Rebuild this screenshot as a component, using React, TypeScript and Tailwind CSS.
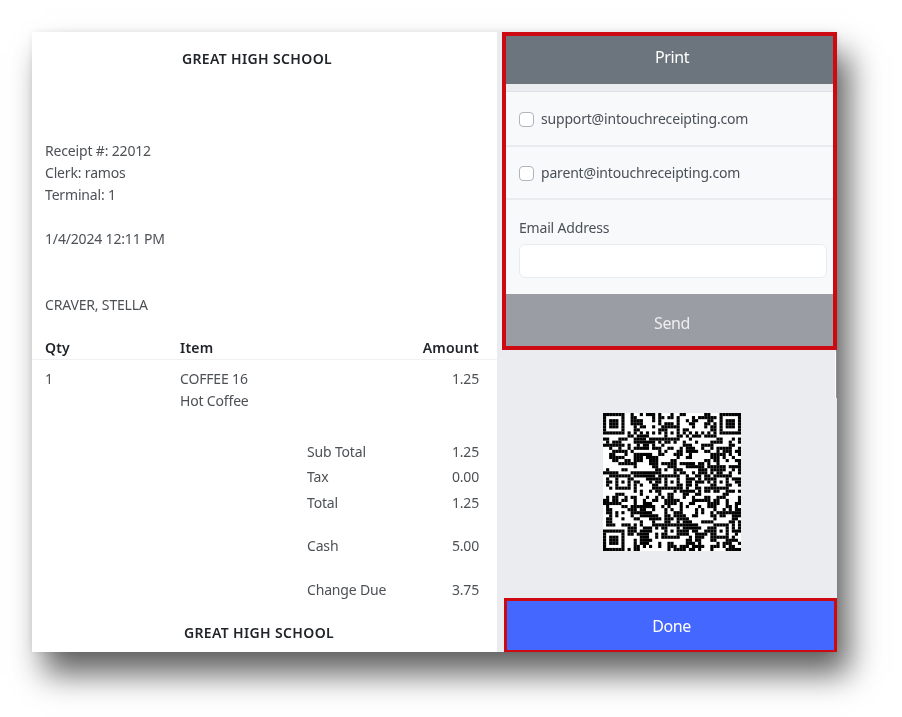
import React from "react";

const QR_SIZE = 45;

// qr version 7 layout: fixed patterns are real, data modules are a seeded fill
const buildQr = () => {
  const grid: number[][] = [];
  let seed = 22012;
  for (let y = 0; y < QR_SIZE; y++) {
    const row: number[] = [];
    for (let x = 0; x < QR_SIZE; x++) {
      seed = (seed * 1103515245 + 12345) & 0x7fffffff;
      const prev = x > 0 ? row[x - 1] : 0;
      const above = y > 0 ? grid[y - 1][x] : 0;
      const chance = 0.34 + prev * 0.14 + above * 0.14;
      row.push((seed >> 8) % 1000 < chance * 1000 ? 1 : 0);
    }
    grid.push(row);
  }
  const clear = (x0: number, y0: number, w: number, h: number) => {
    for (let y = y0; y < y0 + h; y++)
      for (let x = x0; x < x0 + w; x++) grid[y][x] = 0;
  };
  const ring = (x0: number, y0: number, size: number) => {
    for (let y = 0; y < size; y++)
      for (let x = 0; x < size; x++) {
        const edge = x === 0 || y === 0 || x === size - 1 || y === size - 1;
        const inner = size === 7 ? x > 1 && x < 5 && y > 1 && y < 5 : x === 2 && y === 2;
        grid[y0 + y][x0 + x] = edge || inner ? 1 : 0;
      }
  };
  clear(0, 0, 8, 8);
  clear(QR_SIZE - 8, 0, 8, 8);
  clear(0, QR_SIZE - 8, 8, 8);
  ring(0, 0, 7);
  ring(QR_SIZE - 7, 0, 7);
  ring(0, QR_SIZE - 7, 7);
  for (let i = 8; i < QR_SIZE - 8; i++) {
    grid[6][i] = i % 2 === 0 ? 1 : 0;
    grid[i][6] = i % 2 === 0 ? 1 : 0;
  }
  const centers = [
    [6, 22],
    [22, 6],
    [22, 22],
    [22, 38],
    [38, 22],
    [38, 38],
  ];
  centers.forEach(([cx, cy]) => {
    for (let y = 0; y < 5; y++)
      for (let x = 0; x < 5; x++) {
        const on = x === 0 || y === 0 || x === 4 || y === 4 || (x === 2 && y === 2);
        grid[cy - 2 + y][cx - 2 + x] = on ? 1 : 0;
      }
  });
  return grid;
};

const QrCode = () => {
  const grid = buildQr();
  return (
    <svg viewBox={`0 0 ${QR_SIZE} ${QR_SIZE}`} className="w-[138px] h-[138px] block bg-white" shapeRendering="auto">
      {grid.map((row, y) =>
        row.map((cell, x) => (cell ? <rect key={`${x}-${y}`} x={x} y={y} width={1.02} height={1.02} fill="#000" /> : null)),
      )}
    </svg>
  );
};

const totals = [
  { label: "Sub Total", value: "1.25", cls: "mt-[29px]" },
  { label: "Tax", value: "0.00", cls: "mt-[3px]" },
  { label: "Total", value: "1.25", cls: "mt-[4px]" },
  { label: "Cash", value: "5.00", cls: "mt-[21px]" },
  { label: "Change Due", value: "3.75", cls: "mt-[22px]" },
];

export default function App() {
  return (
    <div className="w-[902px] h-[717px] overflow-hidden bg-white pl-8 pt-8 font-['Noto_Sans',sans-serif] text-[14px] leading-[22px]">
      <div className="flex w-[805px] h-[620px] bg-white shadow-[12px_22px_30px_rgba(0,0,0,0.62),0_0_8px_rgba(0,0,0,0.08)] blur-[0.35px]">
        {/* receipt */}
        <div className="w-[465px] shrink-0 text-[#4d5156] tracking-[-0.17px]">
          <p className="pt-4 pr-[15px] text-center font-semibold text-[#212529] tracking-[0.35px]">GREAT HIGH SCHOOL</p>
          <div className="pl-[13px] pt-[70px]">
            <p>Receipt #: 22012</p>
            <p>Clerk: ramos</p>
            <p>Terminal: 1</p>
            <p className="mt-[22px]">1/4/2024 12:11 PM</p>
            <p className="mt-[44px]">CRAVER, STELLA</p>
          </div>
          <div className="mt-[21px] h-[22px] border-b border-[#f0f1f2] box-content grid grid-cols-[135px_1fr_auto] pl-[13px] pr-[18px] font-semibold text-[#212529] tracking-[0.2px]">
            <span>Qty</span>
            <span>Item</span>
            <span>Amount</span>
          </div>
          <div className="mt-[8px] grid grid-cols-[135px_1fr_auto] pl-[13px] pr-[18px]">
            <span>1</span>
            <div>
              <p>COFFEE 16</p>
              <p>Hot Coffee</p>
            </div>
            <span>1.25</span>
          </div>
          <div className="pl-[275px] pr-[18px]">
            {totals.map((t) => (
              <div key={t.label} className={`flex justify-between ${t.cls}`}>
                <span>{t.label}</span>
                <span>{t.value}</span>
              </div>
            ))}
          </div>
          <p className="mt-[21px] pr-[11px] text-center font-semibold text-[#212529] tracking-[0.35px]">GREAT HIGH SCHOOL</p>
        </div>

        {/* divider */}
        <div className="w-[2px] shrink-0 bg-[#e9ecef]" />

        {/* actions */}
        <div className="w-[338px] shrink-0 flex flex-col bg-[#ebecf0]">
          <div className="ml-[3px] h-[318px] border-4 border-[#cd0a12] flex flex-col text-[#495057]">
            <div className="h-[48px] pb-[6px] pl-[5px] bg-[#6c757d] text-white text-[16px] tracking-[-0.4px] flex items-center justify-center">Print</div>
            <div className="flex-1 mt-[7px] bg-[#f8f9fa] border-t border-[#dee2e6] flex flex-col">
              <label className="h-[55px] pt-[1px] border-b-2 border-[#e9ecef] flex items-center pl-[13px] gap-[7px]">
                <span className="w-[15px] h-[15px] rounded-[4px] border border-[#adb5bd] bg-white" />
                <span className="tracking-[-0.18px]">support@intouchreceipting.com</span>
              </label>
              <label className="h-[53px] pt-[1px] border-b-2 border-[#e9ecef] flex items-center pl-[13px] gap-[7px]">
                <span className="w-[15px] h-[15px] rounded-[4px] border border-[#adb5bd] bg-white" />
                <span className="tracking-[-0.18px]">parent@intouchreceipting.com</span>
              </label>
              <div className="pt-[17px] px-[13px]">
                <p className="tracking-[-0.18px]">Email Address</p>
                <div className="mt-[5px] h-[34px] w-[308px] rounded-[6px] bg-white border border-[#e9ecef]" />
              </div>
            </div>
            <div className="h-[52px] pt-[6px] pl-[5px] bg-[#9a9da3] text-[#eceef0] text-[16px] tracking-[-0.4px] flex items-center justify-center">Send</div>
          </div>
          <div className="relative flex-1 flex items-center justify-center pl-[8px] pt-[16px]">
            <QrCode />
            <div className="absolute top-[2px] right-[1px] w-[1px] h-[46px] bg-white" />
            <div className="absolute top-0 right-0 w-[1px] h-[48px] bg-[#8f8f8f]" />
          </div>
          <div className="ml-[5px] h-[54px] pl-[2px] border-[3px] border-b-2 border-[#cd0a12] bg-[#4468ff] text-white text-[16px] tracking-[-0.4px] flex items-center justify-center">
            Done
          </div>
        </div>
      </div>
    </div>
  );
}
